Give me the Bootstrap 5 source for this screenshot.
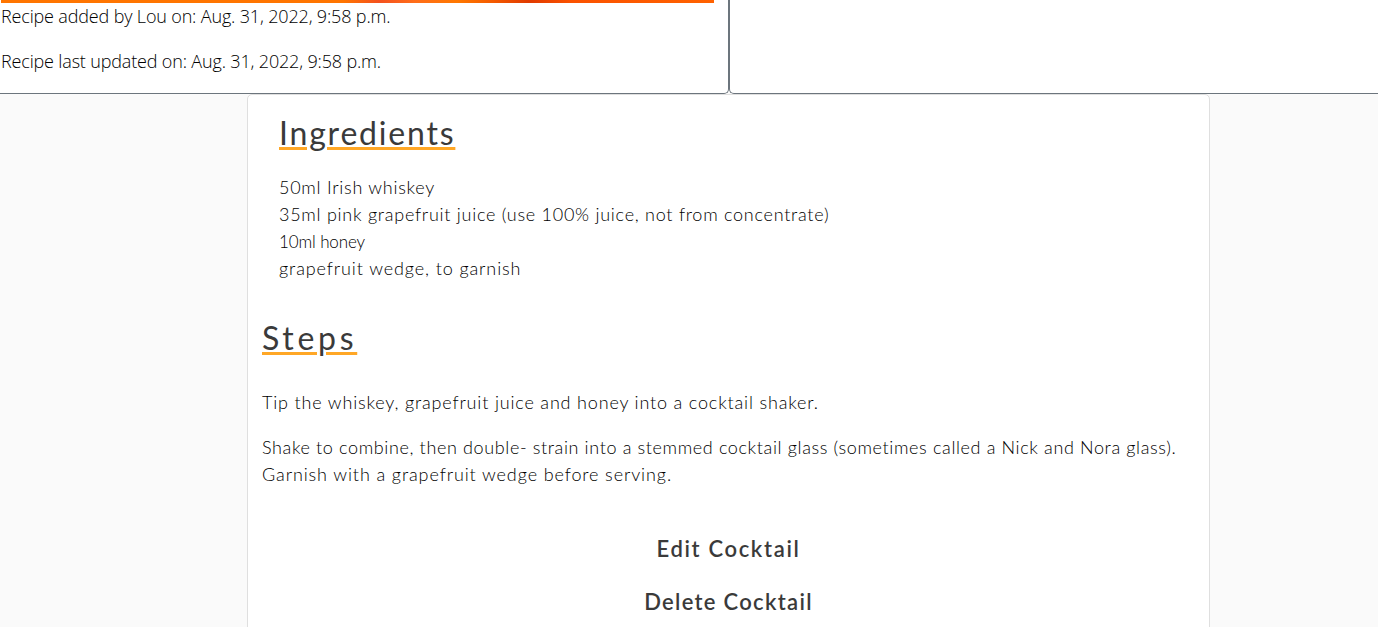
<!DOCTYPE html>
<html lang="en">
<head>
<meta charset="utf-8">
<meta name="viewport" content="width=device-width, initial-scale=1">
<title>Cocktail recipe</title>
<link href="https://cdn.jsdelivr.net/npm/bootstrap@5.3.0/dist/css/bootstrap.min.css" rel="stylesheet">
<style>
html{font-size:18px}
body{background:#fafafa;font-family:"Open Sans",sans-serif;overflow:hidden;height:627px;line-height:27px}
.top-panels{height:94px}
.panel-left,.panel-right{border:0 solid #6c757d;border-bottom-width:1px;background:#fff}
.panel-left{width:729px;border-right-width:1px;border-bottom-right-radius:5px;padding-left:1px}
.panel-right{border-left-width:1px;border-bottom-left-radius:5px}
.photo-edge{width:713px;height:3px;background:linear-gradient(90deg,#ff7500 0 48%,#f4511e 53%,#ff6d1a 58%,#ff7800 64%,#f45a00 69%,#e03a00 74%,#fb5200 80%,#ff6200)}
.meta-text{color:#000;font-weight:300;white-space:nowrap;letter-spacing:-.16px}
.meta-text p{margin-bottom:18px}
.recipe-card{width:963px;height:560px;margin-left:247px;border:1px solid #dfdfdf;border-radius:5px;color:#000;padding:0 14px;font-family:Lato,sans-serif;font-weight:300}
.recipe-card h2{font-size:32px;line-height:43px;font-weight:400;color:#3a3a3a;text-decoration:underline #ffa726 3px;text-underline-offset:2px;margin:0}
.ingredients-block{padding:16px 0 0 17px}
.ingredients-block .ing-title{letter-spacing:1.8px;margin-bottom:20px}
.steps-title{letter-spacing:3.7px}
.hand-line{display:block;white-space:nowrap;height:27px;letter-spacing:.83px}
.ls-snug{letter-spacing:.63px}
.ls-mid{letter-spacing:.74px}
.ls-wide{letter-spacing:.89px}
.ls-tight{font-size:17px;letter-spacing:-.13px}
.steps-block{padding-top:34px}
.steps-copy{margin-top:30px}
.action-link{font-size:22px;font-weight:600;color:#3a3a3a;text-decoration:none;line-height:33px;letter-spacing:1.65px}
.ls-delete{letter-spacing:1.3px}
.action-list{gap:20px;margin-top:26px}
</style>
<script src="https://cdn.jsdelivr.net/npm/bootstrap@5.3.0/dist/js/bootstrap.bundle.min.js"></script>
</head>
<body>
<div class="top-panels d-flex">
  <section class="panel-left flex-shrink-0">
    <div class="photo-edge"></div>
    <div class="meta-text"><p>Recipe added by Lou on: Aug. 31, 2022, 9:58 p.m.</p><p>Recipe last updated on: Aug. 31, 2022, 9:58 p.m.</p></div>
  </section>
  <section class="panel-right flex-grow-1"></section>
</div>
<main class="recipe-card card">
  <section class="ingredients-block">
    <h2 class="ing-title">Ingredients</h2>
    <div>
      <span class="hand-line ls-mid">50ml Irish whiskey</span>
      <span class="hand-line ls-mid">35ml pink grapefruit juice (use 100% juice, not from concentrate)</span>
      <span class="hand-line ls-tight">10ml honey</span>
      <span class="hand-line ls-wide">grapefruit wedge, to garnish</span>
    </div>
  </section>
  <section class="steps-block">
    <h2 class="steps-title">Steps</h2>
    <div class="steps-copy">
      <p class="mb-3"><span class="hand-line">Tip the whiskey, grapefruit juice and honey into a cocktail shaker.</span></p>
      <p><span class="hand-line ls-snug">Shake to combine, then double- strain into a stemmed cocktail glass (sometimes called a Nick and Nora glass).</span>
      <span class="hand-line ls-wide">Garnish with a grapefruit wedge before serving.</span></p>
    </div>
  </section>
  <div class="action-list d-flex flex-column align-items-center">
    <a class="action-link" href="#">Edit Cocktail</a>
    <a class="action-link ls-delete" href="#">Delete Cocktail</a>
  </div>
</main>
</body>
</html>
